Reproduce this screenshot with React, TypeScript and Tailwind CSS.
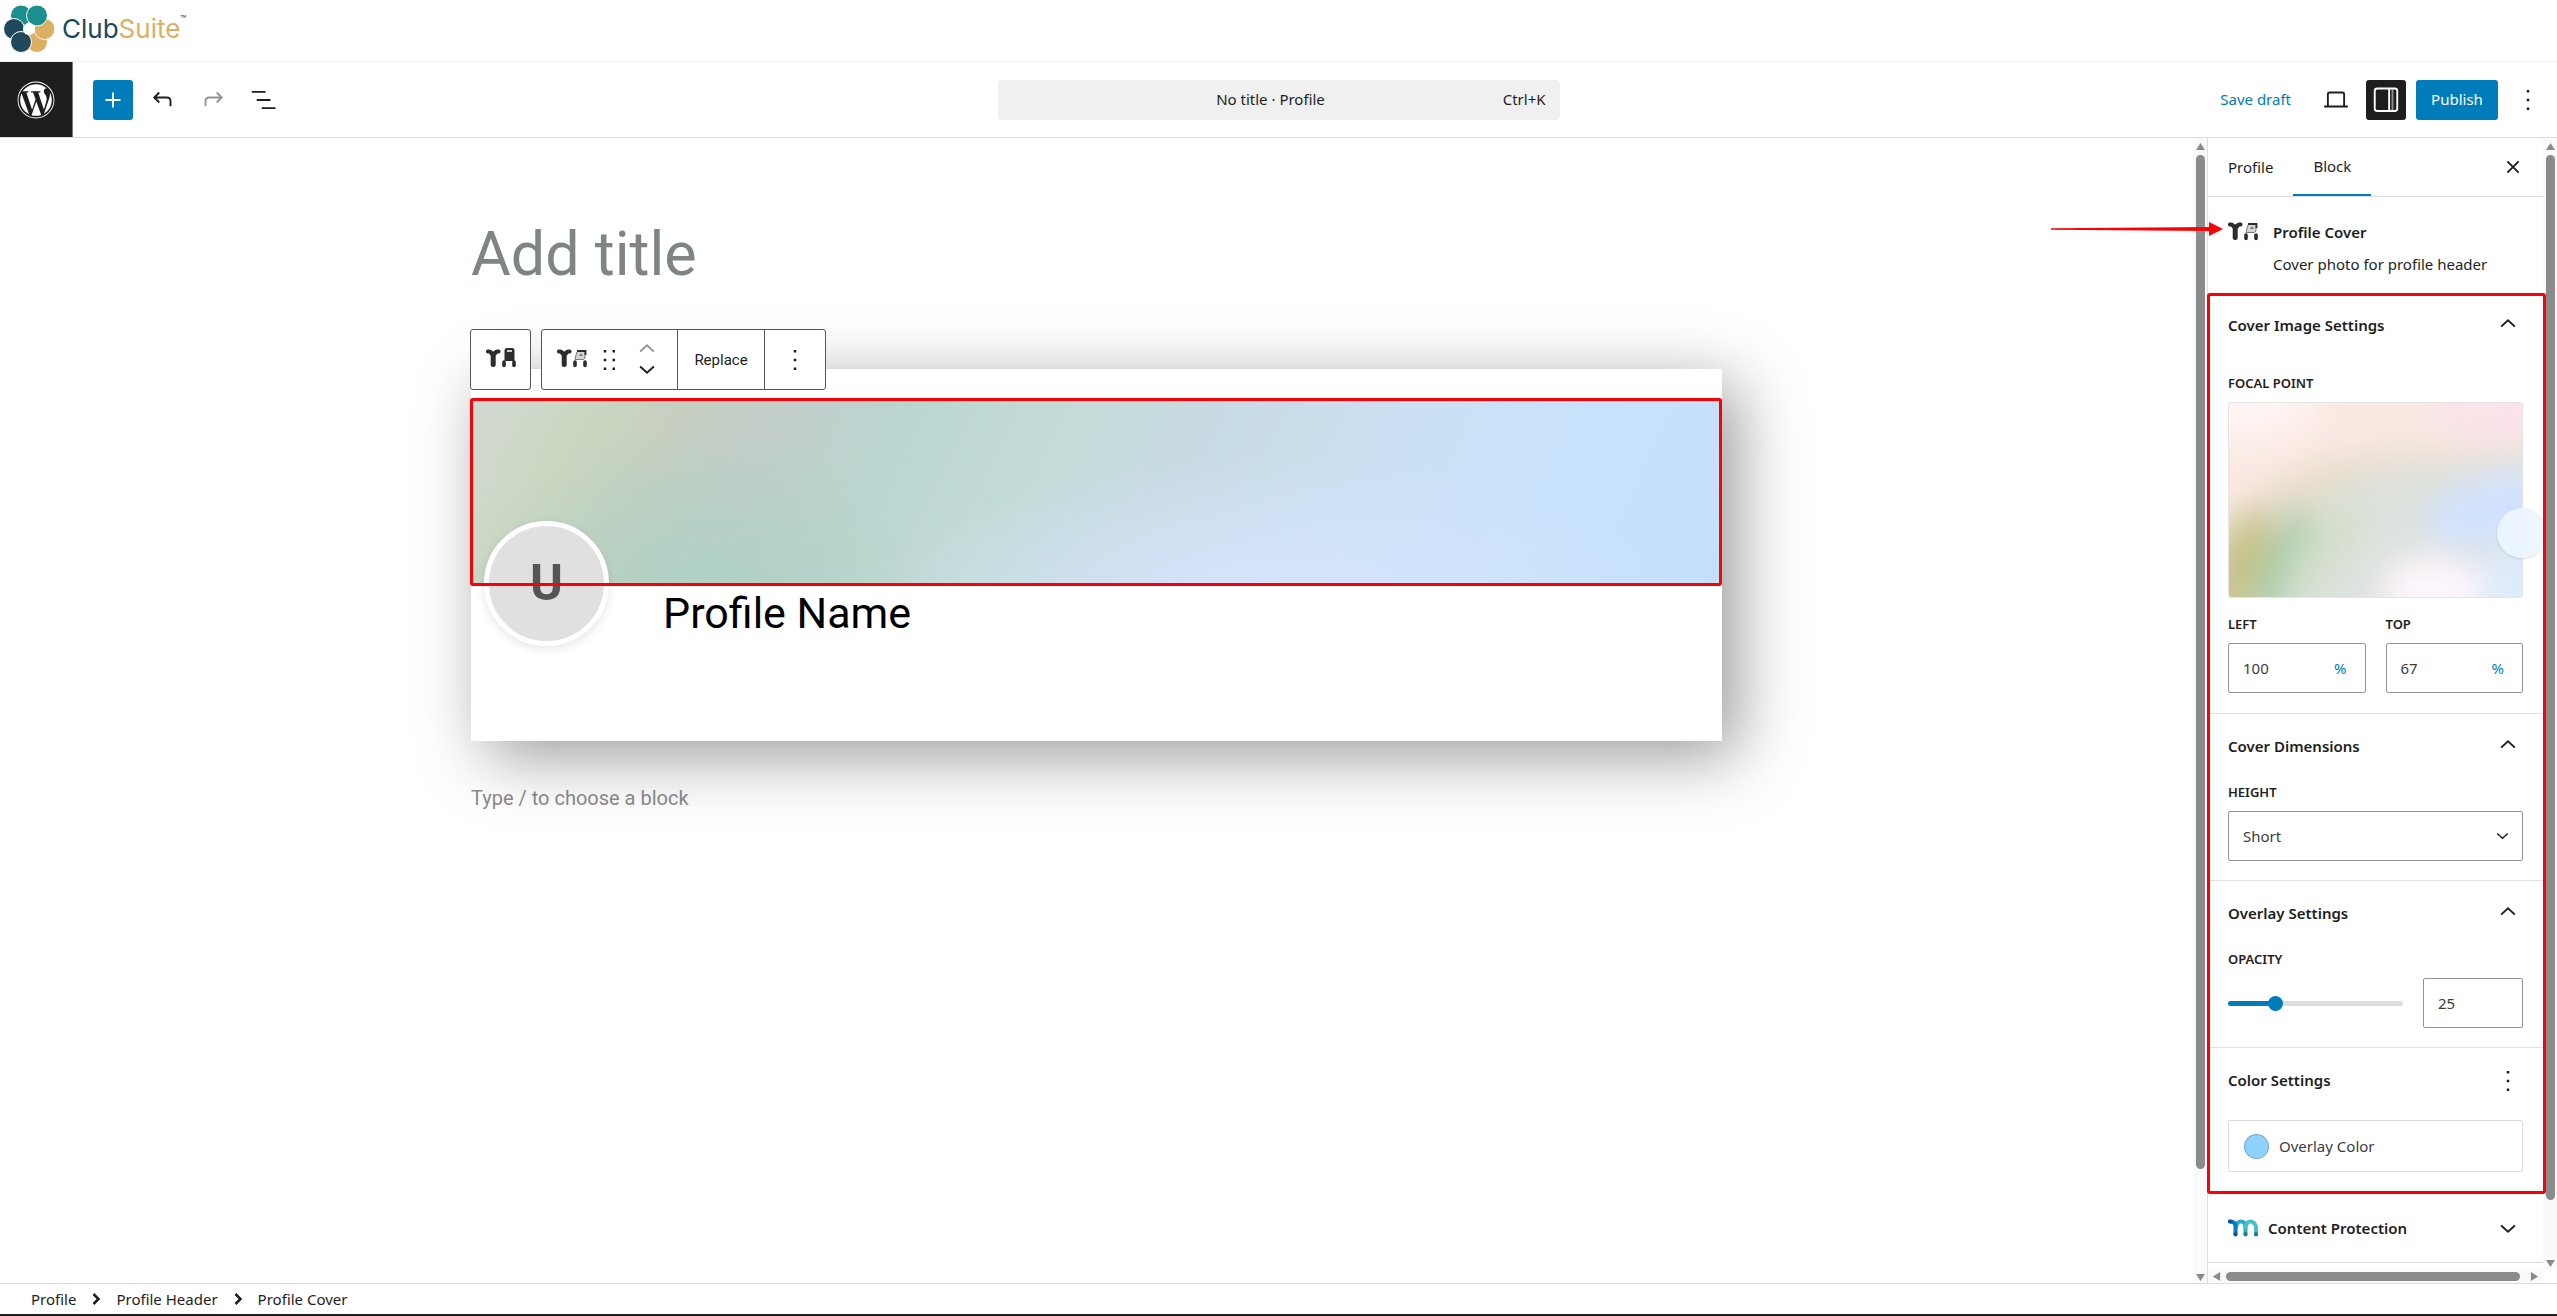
import { useState, type ReactNode } from 'react';
import { FaWordpress } from 'react-icons/fa';

function ClubSuiteLogo() {
  return (
    <a href="#home" className="flex items-center gap-[7px] pb-1" aria-label="ClubSuite">
      <svg viewBox="0 0 52 48" className="h-12 w-[52px]" stroke="#fff" strokeWidth="1" aria-hidden="true">
        <circle cx="34" cy="37" r="10.500" fill="#dbb063" />
        <circle cx="41.500" cy="24" r="10.500" fill="#dbb063" />
        <circle cx="18" cy="10.500" r="10.500" fill="#1b8f8e" />
        <circle cx="34" cy="10.500" r="10.500" fill="#1b8f8e" />
        <circle cx="11" cy="24" r="10.500" fill="#20495c" />
        <circle cx="18" cy="37" r="10.500" fill="#20495c" />
        <circle cx="26" cy="24" r="6" fill="#fff" stroke="none" />
      </svg>
      <span className="flex items-start font-['Inter',sans-serif] text-[26px] leading-8 text-[#20495c]">
        Club<span className="text-[#dbb063]">Suite</span>
        <span className="text-[10px] leading-3">™</span>
      </span>
    </a>
  );
}

function Svg({ children, className = 'size-[30px]' }: { children: ReactNode; className?: string }) {
  return (
    <svg viewBox="0 0 24 24" className={className} fill="none" stroke="currentColor" strokeWidth="1.5" aria-hidden="true">
      {children}
    </svg>
  );
}

function Kebab() {
  return (
    <svg viewBox="0 0 24 24" className="size-[30px]" fill="currentColor" aria-hidden="true">
      <path d="M11 4h2v2h-2zM11 11h2v2h-2zM11 18h2v2h-2z" />
    </svg>
  );
}

function Chevron({ up = false, className = 'size-[30px]' }: { up?: boolean; className?: string }) {
  return <Svg className={className}>{up ? <path d="m6.500 12.500 5.500-5 5.500 5" /> : <path d="m6.500 10 5.500 5 5.500-5" />}</Svg>;
}

function BlockIcon({ full = false }: { full?: boolean }) {
  return (
    <svg viewBox="0 0 30 22" className="h-[22px] w-[30px] text-[#2c2c2c]" aria-hidden="true">
      <path d="M2 4.500q2.500-.5 3.500 2h3.500q1-2.500 3.500-2" fill="none" stroke="currentColor" strokeWidth="4" strokeLinecap="round" strokeLinejoin="round" />
      <path d="M7.200 7v10.500" stroke="currentColor" strokeWidth="5" strokeLinecap="round" />
      {full ? (
        <>
          <path d="M18.500 3.500q0-2.500 2.500-2.500h5q2.500 0 2.500 2.500V14h-10z" fill="currentColor" />
          <path d="M21 4h5" stroke="#fff" strokeWidth="1.500" />
        </>
      ) : (
        <>
          <path d="M18 12.500 19.500 6q.5-1.500 2-1.500H28V11l-1.500 1.500z" fill="#d4d4d4" stroke="#777" strokeWidth="1" />
          <path d="M20 4h8.500v4" fill="none" stroke="currentColor" strokeWidth="1.800" />
          <path d="m22 8.500 2-1.500 2 1.500z" fill="currentColor" />
        </>
      )}
      <path d="M18 15v3.500M28 15v3.500" stroke="currentColor" strokeWidth="3.600" strokeLinecap="round" />
    </svg>
  );
}

function Arrow({ dir }: { dir: 'up' | 'down' | 'left' | 'right' }) {
  const points = {
    up: '5,1 10,9 0,9',
    down: '0,1 10,1 5,9',
    left: '1,5 9,0 9,10',
    right: '9,5 1,0 1,10',
  };
  return (
    <svg viewBox="0 0 10 10" className="size-[9px] shrink-0" aria-hidden="true">
      <polygon points={points[dir]} fill="#8b8b8b" />
    </svg>
  );
}

function VScroll({ thumb }: { thumb: string }) {
  return (
    <div className="flex w-[14px] shrink-0 flex-col items-center justify-between bg-[#fafafa] pt-1 pb-px">
      <Arrow dir="up" />
      <div className="flex w-full flex-1 justify-center py-1">
        <div className={`w-[9px] rounded-full bg-[#8b8b8b] ${thumb}`} />
      </div>
      <Arrow dir="down" />
    </div>
  );
}

function PanelTitle({ children, icon }: { children: ReactNode; icon?: ReactNode }) {
  return (
    <h2>
      <button className="flex h-[65px] w-full items-center justify-between text-[15px] font-semibold">
        {children}
        {icon ?? <Chevron up />}
      </button>
    </h2>
  );
}

function UnitField({ id, label, value }: { id: string; label: string; value: string }) {
  const [val, setVal] = useState(value);
  return (
    <div className="min-w-0 flex-1">
      <label htmlFor={id} className="block text-[13px] leading-5 font-semibold">
        {label}
      </label>
      <div className="mt-[9px] flex h-[50px] items-center rounded-[2px] border border-[#949494] pr-[18px]">
        <input
          id={id}
          value={val}
          onChange={(e) => setVal(e.target.value)}
          className="min-w-0 flex-1 pl-[14px] text-[15px] text-[#3c3c3c] outline-none"
        />
        <span className="text-[15px] text-[#007cba]">%</span>
      </div>
    </div>
  );
}

function TopBar() {
  return (
    <header className="grid h-[76px] shrink-0 grid-cols-[1fr_562px_1fr] items-center border-b border-[#ddd]">
      <div className="flex h-full items-center gap-[10px]">
        <a href="#dashboard" aria-label="WordPress" className="mr-[10px] flex h-full w-[73px] items-center justify-center border-r border-[#777] bg-[#1e1e1e] text-white">
          <FaWordpress className="size-[38px]" />
        </a>
        <button aria-label="Add block" className="flex size-10 items-center justify-center rounded-[3px] bg-[#007cba] text-white">
          <Svg>
            <path d="M12 6v12M6 12h12" />
          </Svg>
        </button>
        <button aria-label="Undo" className="flex size-10 items-center justify-center">
          <Svg>
            <path d="M9 6 5 10l4 4M5 10h10q3 0 3 3v4" />
          </Svg>
        </button>
        <button aria-label="Redo" className="flex size-10 items-center justify-center text-[#949494]">
          <Svg>
            <path d="m15 6 4 4-4 4M19 10H9q-3 0-3 3v4" />
          </Svg>
        </button>
        <button aria-label="Document overview" className="flex size-10 items-center justify-center">
          <Svg>
            <path d="M3 5.500h11M7 12h11M11 18.500h11" />
          </Svg>
        </button>
      </div>
      <button className="grid h-10 grid-cols-[1fr_auto_1fr] items-center rounded-[4px] bg-[#f0f0f0] px-[14px] text-[15px]">
        <span className="col-start-2 pr-4">No title · Profile</span>
        <span className="text-right">Ctrl+K</span>
      </button>
      <div className="flex items-center justify-end gap-[10px] pr-[9px]">
        <button className="px-[15px] text-[15px] text-[#007cba]">Save draft</button>
        <button aria-label="Preview" className="flex size-10 items-center justify-center">
          <Svg>
            <path d="M5.500 16.500V7.500q0-1.500 1.500-1.500h10q1.500 0 1.500 1.500v9M2.500 17.200h19" />
          </Svg>
        </button>
        <button aria-label="Settings" className="flex size-10 items-center justify-center rounded-[3px] bg-[#1e1e1e] text-white">
          <Svg>
            <rect x="3" y="2.800" width="18" height="18" rx="2" />
            <path d="M14.500 3v18" />
            <path d="M17.200 3v18" opacity="0.500" />
          </Svg>
        </button>
        <button className="h-10 w-[82px] rounded-[3px] bg-[#007cba] text-[15px] text-white">Publish</button>
        <button aria-label="Options" className="flex size-10 items-center justify-center">
          <Kebab />
        </button>
      </div>
    </header>
  );
}

function BlockToolbar() {
  return (
    <div className="absolute -top-10 -left-px z-20 flex h-[61px] gap-[10px]">
      <button aria-label="Select parent block" className="flex w-[61px] items-center justify-center rounded-[3px] border border-[#555] bg-white pb-1">
        <BlockIcon full />
      </button>
      <div className="flex divide-x divide-[#555] rounded-[3px] border border-[#555] bg-white">
        <div className="flex w-[136px] items-center pl-[15px]">
          <button aria-label="Profile Cover" className="pb-1">
            <BlockIcon />
          </button>
          <button aria-label="Drag" className="ml-2">
            <svg viewBox="0 0 24 24" className="size-[30px]" fill="currentColor" aria-hidden="true">
              <path d="M7 4h2v2H7zM14 4h2v2h-2zM7 11h2v2H7zM14 11h2v2h-2zM7 18h2v2H7zM14 18h2v2h-2z" />
            </svg>
          </button>
          <div className="ml-[7px] flex flex-col -space-y-[12px]">
            <button aria-label="Move up" className="text-[#949494]">
              <Chevron up />
            </button>
            <button aria-label="Move down">
              <Chevron />
            </button>
          </div>
        </div>
        <button className="w-[87px] pt-[2px] text-[15px]">Replace</button>
        <button aria-label="Options" className="flex w-[60px] items-center justify-center">
          <Kebab />
        </button>
      </div>
    </div>
  );
}

function Canvas() {
  return (
    <main className="min-w-0 flex-1 overflow-hidden px-8 pt-[76px] font-['Roboto',sans-serif]">
      <div className="mx-auto max-w-[1251px]">
        <h1 className="text-[61px] leading-[80px] text-[#7f8583]">Add title</h1>
        <section className="relative mt-[75px] h-[372px] bg-white pt-[30px] shadow-[15px_15px_63px_rgba(0,0,0,0.4)]">
          <BlockToolbar />
          <div className="h-[186px] bg-[radial-gradient(ellipse_18%_90%_at_18%_105%,#aed2c4,transparent),radial-gradient(ellipse_32%_80%_at_64%_110%,#d6e5fe,transparent),linear-gradient(115deg,#d3dad2_0%,#cad6c0_9%,#c7cfc0_16%,#c2cecb_24%,#bad5d0_33%,#c3dbd7_44%,#c8dbe2_55%,#cbdff0_68%,#c9e2fa_82%,#c5e0fd_100%)]" />
          <div className="pointer-events-none absolute top-[29px] right-0 -left-px z-10 h-[188px] rounded-[3px] border-3 border-[#fb0007]" />
          <div className="flex">
            <div className="-mt-[64px] ml-[13px] flex size-[125px] items-center justify-center rounded-full border-5 border-white bg-[#e0e0e0] text-[50px] font-bold text-[#555] shadow-[0_3px_10px_rgba(0,0,0,0.1)]">
              U
            </div>
            <p className="ml-[54px] text-[43px] leading-[56px] text-black">Profile Name</p>
          </div>
        </section>
        <p className="mt-[41px] text-[20px] leading-8 text-[#8c8c8c]">Type / to choose a block</p>
      </div>
    </main>
  );
}

function FocalPicture() {
  return (
    <svg viewBox="0 0 295 196" preserveAspectRatio="none" className="size-full rounded-[2px]" aria-hidden="true">
      <defs>
        <filter id="soft" x="-50%" y="-50%" width="200%" height="200%">
          <feGaussianBlur stdDeviation="16" />
        </filter>
      </defs>
      <rect width="295" height="196" fill="#fae9e2" />
      <g filter="url(#soft)">
        <ellipse cx="0" cy="0" rx="90" ry="40" fill="#fef4f3" />
        <ellipse cx="290" cy="10" rx="90" ry="30" fill="#fce3ea" />
        <path d="M-30 150Q50 50 170 50T330 45V230H-30z" fill="#e6dccb" />
        <path d="M10 240Q50 90 160 70T330 60V240z" fill="#dde2de" />
        <ellipse cx="8" cy="165" rx="22" ry="65" fill="#c6c183" transform="rotate(22 8 165)" />
        <ellipse cx="52" cy="165" rx="18" ry="65" fill="#a3cba6" transform="rotate(22 52 165)" />
        <ellipse cx="95" cy="150" rx="22" ry="65" fill="#d4dfcb" transform="rotate(35 95 150)" />
        <ellipse cx="275" cy="105" rx="80" ry="32" fill="#d2e2ff" transform="rotate(-15 275 105)" />
        <ellipse cx="300" cy="185" rx="50" ry="40" fill="#ddecfd" />
        <ellipse cx="205" cy="190" rx="52" ry="34" fill="#fff7fe" />
      </g>
    </svg>
  );
}

function BlockSettings() {
  const [opacity, setOpacity] = useState(25);
  return (
    <div className="relative">
      <div className="overflow-hidden">
        <section className="h-[421px] border-b border-[#e0e0e0] px-5">
          <PanelTitle>Cover Image Settings</PanelTitle>
          <p className="mt-[15px] text-[13px] leading-5 font-semibold">FOCAL POINT</p>
          <div className="relative mt-[9px] h-[196px] rounded-[2px] border border-black/10">
            <FocalPicture />
            <span className="absolute top-[105px] -right-[25px] size-[50px] rounded-full bg-[#ecf5ff]/95 shadow-sm" />
          </div>
          <div className="mt-4 flex gap-5">
            <UnitField id="left" label="LEFT" value="100" />
            <UnitField id="top" label="TOP" value="67" />
          </div>
        </section>

        <section className="h-[167px] border-b border-[#e0e0e0] px-5">
          <PanelTitle>Cover Dimensions</PanelTitle>
          <label htmlFor="height" className="mt-[3px] block text-[13px] leading-5 font-semibold">
            HEIGHT
          </label>
          <div className="relative mt-[9px]">
            <select id="height" className="h-[50px] w-full appearance-none rounded-[2px] border border-[#949494] bg-white px-[14px] text-[15px] text-[#3c3c3c]">
              <option>Short</option>
              <option>Medium</option>
              <option>Tall</option>
            </select>
            <Chevron className="pointer-events-none absolute top-[13px] right-[9px] size-[23px]" />
          </div>
        </section>

        <section className="h-[167px] border-b border-[#e0e0e0] px-5">
          <PanelTitle>Overlay Settings</PanelTitle>
          <label htmlFor="opacity" className="mt-[3px] block text-[13px] leading-5 font-semibold">
            OPACITY
          </label>
          <div className="mt-[9px] flex items-center gap-5">
            <input
              id="opacity"
              type="range"
              value={opacity}
              onChange={(e) => setOpacity(Number(e.target.value))}
              className="h-[5px] min-w-0 flex-1 appearance-none rounded-full [&::-webkit-slider-thumb]:size-[15px] [&::-webkit-slider-thumb]:appearance-none [&::-webkit-slider-thumb]:rounded-full [&::-webkit-slider-thumb]:bg-[#007cba]"
              style={{ background: `linear-gradient(to right, #007cba ${opacity}%, #ddd ${opacity}%)` }}
            />
            <input
              aria-label="Opacity value"
              value={opacity}
              onChange={(e) => setOpacity(Number(e.target.value) || 0)}
              className="h-[50px] w-[100px] rounded-[2px] border border-[#949494] px-[14px] text-[15px] text-[#3c3c3c]"
            />
          </div>
        </section>

        <section className="h-[146px] px-5">
          <PanelTitle icon={<Kebab />}>Color Settings</PanelTitle>
          <button className="mt-[7px] flex h-[52px] w-full items-center gap-[10px] rounded-[2px] border border-[#ddd] px-[15px] text-[15px] text-[#3c3c3c]">
            <span className="size-[25px] rounded-full border border-black/20 bg-[#8ed1fc]" />
            Overlay Color
          </button>
        </section>
      </div>
      <div className="pointer-events-none absolute top-0 -right-[3px] bottom-0 -left-px z-10 rounded-[3px] border-3 border-[#fb0007]" />
    </div>
  );
}

function Sidebar() {
  return (
    <aside className="flex w-[350px] shrink-0 border-l border-[#ddd]">
      <div className="flex min-w-0 flex-1 flex-col">
        <div className="min-h-0 flex-1">
          <div className="flex h-[59px] items-stretch border-b border-[#ddd] text-[15px]">
            <button className="px-5">Profile</button>
            <button className="border-b-2 border-[#007cba] px-5">Block</button>
            <button aria-label="Close settings" className="ml-auto pr-[15px]">
              <Svg>
                <path d="m7.500 7.500 9 9M16.500 7.500l-9 9" />
              </Svg>
            </button>
          </div>
          <div className="relative flex h-24 gap-[15px] px-5 pt-[19px]">
            <svg viewBox="0 0 172 14" className="absolute top-[25px] -left-[157px] z-20 h-[14px] w-[172px]" aria-hidden="true">
              <path d="M0 6.200 160 5v4L0 7.800z" fill="#fb0007" />
              <path d="m158 0 14 7-14 7z" fill="#fb0007" />
            </svg>
            <span className="pt-1">
              <BlockIcon />
            </span>
            <div className="text-[15px]">
              <h2 className="leading-8 font-semibold">Profile Cover</h2>
              <p className="leading-8">Cover photo for profile header</p>
            </div>
          </div>
          <BlockSettings />
          <button className="flex h-[69px] w-full items-center gap-[10px] border-b border-[#ddd] px-5 text-[15px] font-semibold">
            <svg viewBox="0 0 30 18" className="h-[18px] w-[30px]" fill="none" strokeWidth="4" strokeLinecap="round" aria-hidden="true">
              <path d="M8 8q1-5.500 5-5.500T17.500 8v7" stroke="#2aaec4" />
              <path d="M17.500 8q1-5.500 5-5.500T28 8v7" stroke="#46bfc6" />
              <path d="M2 2.500q5.500 0 5.500 5V15" stroke="#0a7bbd" />
              <path d="M2 2.500h.5M7.500 15v.5" stroke="#0654a0" />
              <path d="M17.500 15v.5M28 15v.5" stroke="#17848c" />
            </svg>
            Content Protection
            <Chevron className="ml-auto size-[30px]" />
          </button>
        </div>
        <div className="flex h-[14px] shrink-0 items-center bg-[#fafafa] px-1">
          <Arrow dir="left" />
          <div className="mr-[10px] ml-[5px] h-[9px] flex-1 rounded-full bg-[#8b8b8b]" />
          <Arrow dir="right" />
        </div>
      </div>
      <div className="flex pb-[14px]">
        <VScroll thumb="h-[95%]" />
      </div>
    </aside>
  );
}

export default function App() {
  const crumbs = ['Profile', 'Profile Header', 'Profile Cover'];
  return (
    <div className="flex h-screen flex-col overflow-hidden border-b-2 border-[#1e1e1e] bg-white font-['Noto_Sans','Segoe_UI',sans-serif] text-[#1e1e1e]">
      <div className="flex h-[62px] shrink-0 items-center border-b border-[#eee] px-[3px]">
        <ClubSuiteLogo />
      </div>
      <TopBar />
      <div className="flex min-h-0 flex-1">
        <Canvas />
        <VScroll thumb="h-[91%]" />
        <Sidebar />
      </div>
      <nav aria-label="Block breadcrumb" className="h-[31px] shrink-0 border-t border-[#ddd] pl-[31px]">
        <ol className="flex h-full items-center text-[15px]">
          {crumbs.map((crumb, i) => (
            <li key={crumb} className="flex items-center">
              {i > 0 && (
                <Svg className="mx-[5px] size-[30px]">
                  <path d="m10 8 4 4-4 4" strokeWidth="2" />
                </Svg>
              )}
              <button>{crumb}</button>
            </li>
          ))}
        </ol>
      </nav>
    </div>
  );
}
